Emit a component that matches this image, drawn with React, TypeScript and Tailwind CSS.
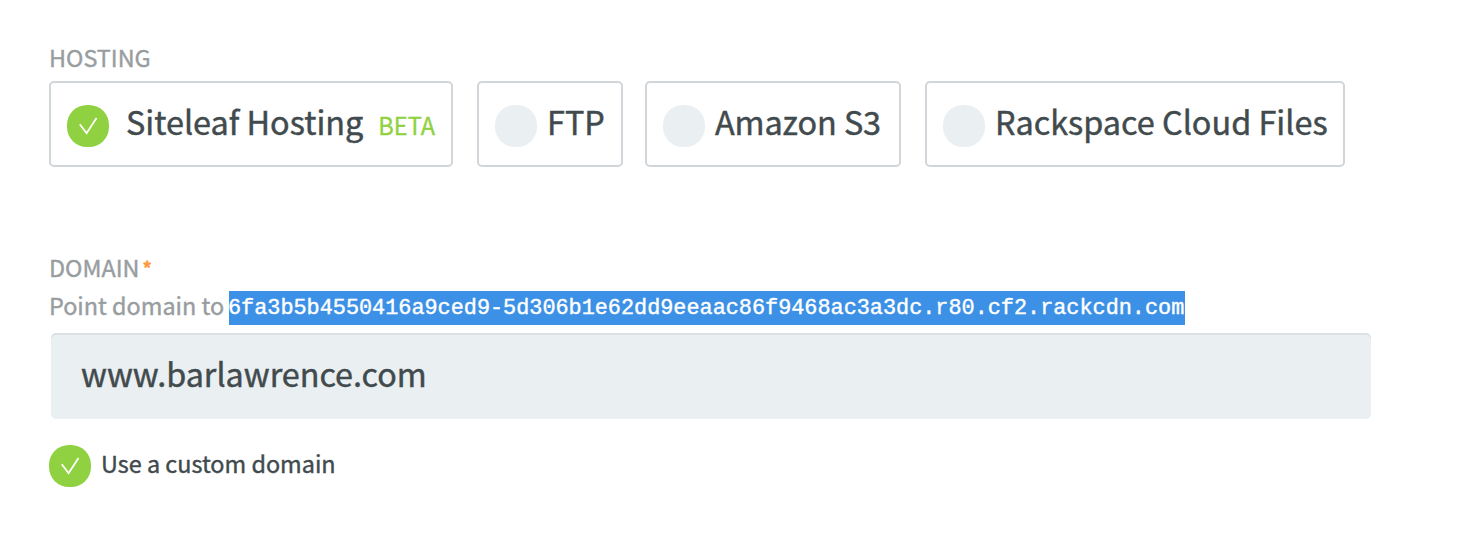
import React from "react";

function Mark({ checked = false }: { checked?: boolean }) {
  return (
    <span
      className={
        "flex size-[42px] shrink-0 items-center justify-center rounded-[20px] " +
        (checked ? "bg-[#8fd140]" : "bg-[#eaeff2]")
      }
    >
      {checked && (
        <svg width="42" height="42" viewBox="0 0 42 42" fill="none" stroke="#fff" strokeWidth="1.8">
          <path d="M12.8 19.3 L19.6 28.2 L29.5 12.9" />
        </svg>
      )}
    </span>
  );
}

function Option({ box, text, label, checked, badge }: { box: string; text: string; label: string; checked?: boolean; badge?: string }) {
  return (
    <label className={"flex h-[86px] shrink-0 items-center rounded-[5px] border-2 border-[#d1d6da] pt-[4px] pl-[16px] " + box}>
      <Mark checked={checked} />
      <span className={"-mt-[10px] text-[32.4px] leading-[48px] whitespace-nowrap text-[#414a4d] [-webkit-text-stroke:0.45px] " + text}>{label}</span>
      {badge && <span className="-mt-[2px] ml-[15px] text-[23.6px] leading-[36px] text-[#8fd140] [-webkit-text-stroke:0.3px]">{badge}</span>}
    </label>
  );
}

export default function App() {
  return (
    <main className="h-[537px] w-[1461px] overflow-hidden bg-white pt-[39px] pl-[49px] font-['Noto_Sans_CJK_SC',sans-serif] text-[#414a4d]">
      <h2 className="h-[42px] text-[23.4px] leading-[36px] text-[#989d9f] [-webkit-text-stroke:0.4px]">HOSTING</h2>
      <div className="flex">
        <Option box="w-[404px]" text="ml-[17px]" label="Siteleaf Hosting" checked badge="BETA" />
        <Option box="ml-[24px] w-[146px]" text="ml-[10px]" label="FTP" />
        <Option box="ml-[22px] w-[256px]" text="ml-[10px] tracking-[-0.1px]" label="Amazon S3" />
        <Option box="ml-[24px] w-[420px]" text="ml-[10px]" label="Rackspace Cloud Files" />
      </div>
      <h2 className="mt-[82px] flex h-[36px] text-[23.4px] leading-[36px] text-[#989d9f] [-webkit-text-stroke:0.4px]">
        DOMAIN<span className="mt-[2px] ml-[3px] text-[20px] text-[#ff9838] [-webkit-text-stroke:0.8px]">*</span>
      </h2>
      <p className="mt-[6px] flex h-[34px] items-center text-[23.4px] leading-[34px] whitespace-nowrap text-[#989d9f]">
        <span className="-mt-[6px] w-[180px] [-webkit-text-stroke:0.4px]">Point domain to</span>
        <span className="h-[34px] w-[956px] bg-[#3c91e6] -indent-[1px] font-['Liberation_Mono',monospace] text-[21.83px] leading-[36px] text-white [-webkit-text-stroke:0.4px]">
          6fa3b5b4550416a9ced9-5d306b1e62dd9eeaac86f9468ac3a3dc.r80.cf2.rackcdn.com
        </span>
      </p>
      <div className="mt-[8px] ml-[2px] flex h-[86px] w-[1320px] items-center rounded-[5px] bg-[#eaeff2] pb-[6px] pl-[30px] text-[32.3px] leading-[48px] shadow-[inset_0_2px_0_#dae0e3] [-webkit-text-stroke:0.45px]">
        www.barlawrence.com
      </div>
      <label className="mt-[26px] flex h-[42px] items-center">
        <Mark checked />
        <span className="-mt-[6px] ml-[10px] text-[23.4px] leading-[36px] [-webkit-text-stroke:0.4px]">Use a custom domain</span>
      </label>
    </main>
  );
}
